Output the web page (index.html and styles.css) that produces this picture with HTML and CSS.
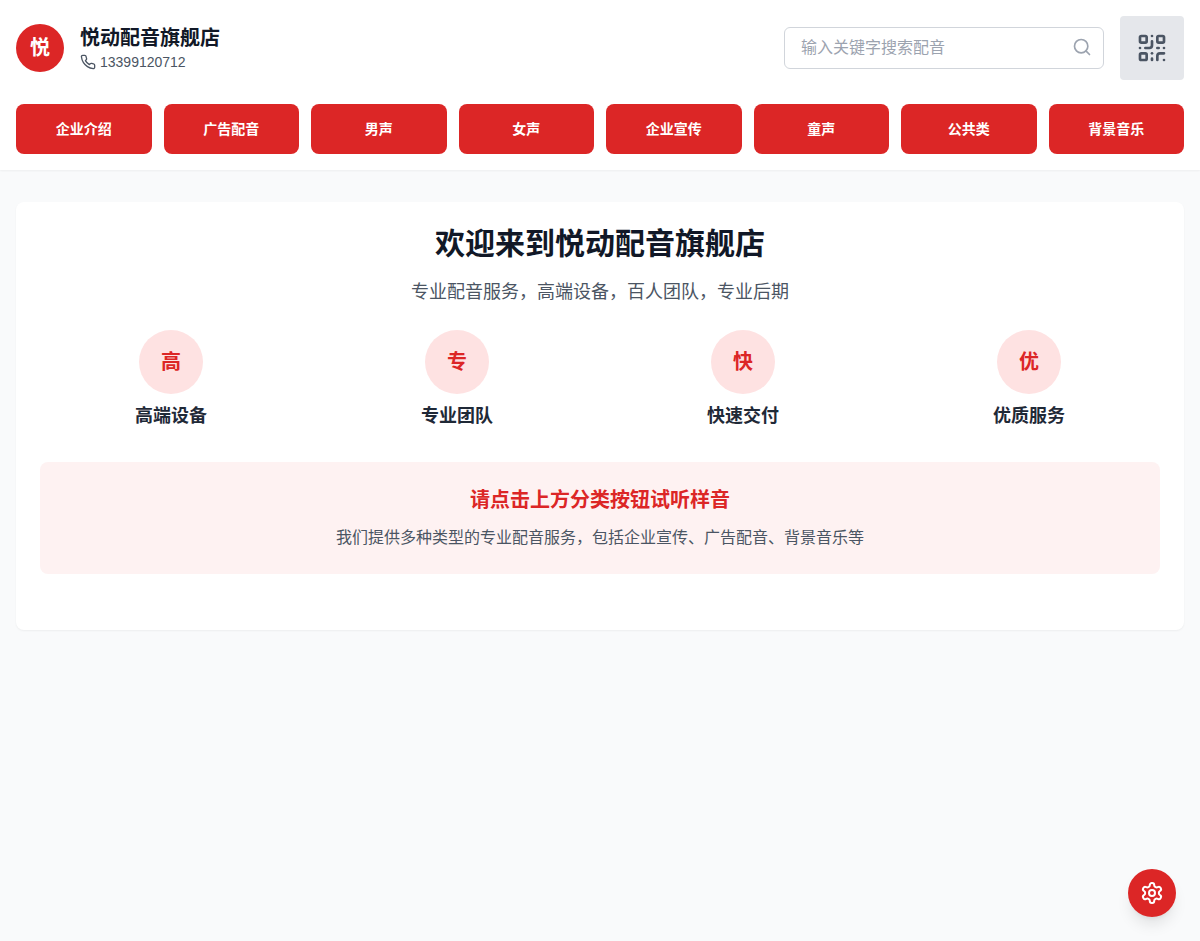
FILE: index.html
```html
<!DOCTYPE html>
<html lang="zh-CN">
<head>
    <meta charset="UTF-8">
    <meta name="viewport" content="width=device-width, initial-scale=1.0">
    <title>悦动配音旗舰店</title>
    <link rel="stylesheet" href="styles.css">
</head>
<body>
    <header class="header">
        <div class="top-bar">
            <div class="brand">
                <div class="logo">悦</div>
                <div>
                    <h1>悦动配音旗舰店</h1>
                    <a class="phone" href="tel:13399120712">
                        <svg class="icon" width="16" height="16" viewBox="0 0 24 24" aria-hidden="true">
                            <path d="M22 16.92v3a2 2 0 0 1-2.18 2 19.79 19.79 0 0 1-8.63-3.07 19.5 19.5 0 0 1-6-6 19.79 19.79 0 0 1-3.07-8.67A2 2 0 0 1 4.11 2h3a2 2 0 0 1 2 1.72 12.84 12.84 0 0 0 .7 2.81 2 2 0 0 1-.45 2.11L8.09 9.91a16 16 0 0 0 6 6l1.27-1.27a2 2 0 0 1 2.11-.45 12.84 12.84 0 0 0 2.81.7A2 2 0 0 1 22 16.92z"/>
                        </svg>
                        <span>13399120712</span>
                    </a>
                </div>
            </div>

            <div class="tools">
                <form class="search" role="search">
                    <input type="text" placeholder="输入关键字搜索配音" aria-label="输入关键字搜索配音">
                    <button type="submit" class="search-btn" aria-label="搜索">
                        <svg class="icon" width="20" height="20" viewBox="0 0 24 24" aria-hidden="true">
                            <circle cx="11" cy="11" r="8"/>
                            <path d="m21 21-4.3-4.3"/>
                        </svg>
                    </button>
                </form>
                <button type="button" class="qr-btn" aria-label="二维码">
                    <svg class="icon" width="32" height="32" viewBox="0 0 24 24" aria-hidden="true">
                        <rect width="5" height="5" x="3" y="3" rx="1"/>
                        <rect width="5" height="5" x="16" y="3" rx="1"/>
                        <rect width="5" height="5" x="3" y="16" rx="1"/>
                        <path d="M21 16h-3a2 2 0 0 0-2 2v3"/>
                        <path d="M21 21v.01"/>
                        <path d="M12 7v3a2 2 0 0 1-2 2H7"/>
                        <path d="M3 12h.01"/>
                        <path d="M12 3h.01"/>
                        <path d="M12 16v.01"/>
                        <path d="M16 12h1"/>
                        <path d="M21 12v.01"/>
                        <path d="M12 21v-1"/>
                    </svg>
                </button>
            </div>
        </div>

        <nav class="categories">
            <button type="button">企业介绍</button>
            <button type="button">广告配音</button>
            <button type="button">男声</button>
            <button type="button">女声</button>
            <button type="button">企业宣传</button>
            <button type="button">童声</button>
            <button type="button">公共类</button>
            <button type="button">背景音乐</button>
        </nav>
    </header>

    <main class="main">
        <section class="welcome">
            <h2>欢迎来到悦动配音旗舰店</h2>
            <p class="intro">专业配音服务，高端设备，百人团队，专业后期</p>

            <div class="features">
                <div class="feature">
                    <div class="feature-icon">高</div>
                    <h3>高端设备</h3>
                </div>
                <div class="feature">
                    <div class="feature-icon">专</div>
                    <h3>专业团队</h3>
                </div>
                <div class="feature">
                    <div class="feature-icon">快</div>
                    <h3>快速交付</h3>
                </div>
                <div class="feature">
                    <div class="feature-icon">优</div>
                    <h3>优质服务</h3>
                </div>
            </div>

            <div class="notice">
                <h3>请点击上方分类按钮试听样音</h3>
                <p>我们提供多种类型的专业配音服务，包括企业宣传、广告配音、背景音乐等</p>
            </div>
        </section>
    </main>

    <button type="button" class="settings-btn" aria-label="设置">
        <svg class="icon" width="24" height="24" viewBox="0 0 24 24" aria-hidden="true">
            <path d="M12.22 2h-.44a2 2 0 0 0-2 2v.18a2 2 0 0 1-1 1.73l-.43.25a2 2 0 0 1-2 0l-.15-.08a2 2 0 0 0-2.73.73l-.22.38a2 2 0 0 0 .73 2.73l.15.1a2 2 0 0 1 1 1.72v.51a2 2 0 0 1-1 1.74l-.15.09a2 2 0 0 0-.73 2.73l.22.38a2 2 0 0 0 2.73.73l.15-.08a2 2 0 0 1 2 0l.43.25a2 2 0 0 1 1 1.73V20a2 2 0 0 0 2 2h.44a2 2 0 0 0 2-2v-.18a2 2 0 0 1 1-1.73l.43-.25a2 2 0 0 1 2 0l.15.08a2 2 0 0 0 2.73-.73l.22-.39a2 2 0 0 0-.73-2.73l-.15-.08a2 2 0 0 1-1-1.74v-.5a2 2 0 0 1 1-1.74l.15-.09a2 2 0 0 0 .73-2.73l-.22-.38a2 2 0 0 0-2.73-.73l-.15.08a2 2 0 0 1-2 0l-.43-.25a2 2 0 0 1-1-1.73V4a2 2 0 0 0-2-2z"/>
            <circle cx="12" cy="12" r="3"/>
        </svg>
    </button>
</body>
</html>
```
FILE: styles.css
```css
* {
    margin: 0;
    padding: 0;
    box-sizing: border-box;
}

body {
    font-family: "Liberation Sans", "Noto Sans CJK SC", sans-serif;
    font-size: 16px;
    line-height: 24px;
    color: #111827;
    background: #f9fafb;
    min-height: 100vh;
}

button,
input {
    font: inherit;
}

button {
    border: none;
    cursor: pointer;
}

.icon {
    display: block;
    flex-shrink: 0;
    fill: none;
    stroke: currentColor;
    stroke-width: 2;
    stroke-linecap: round;
    stroke-linejoin: round;
}

/* Header */
.header {
    background: white;
    padding: 16px;
    box-shadow: 0 1px 2px rgba(0, 0, 0, 0.05);
}

.top-bar {
    display: flex;
    align-items: center;
    justify-content: space-between;
    margin-bottom: 24px;
}

.brand {
    display: flex;
    align-items: center;
    gap: 16px;
}

.logo {
    display: flex;
    align-items: center;
    justify-content: center;
    width: 48px;
    height: 48px;
    border-radius: 50%;
    background: #dc2626;
    color: white;
    font-size: 20px;
    font-weight: bold;
}

.brand h1 {
    font-size: 20px;
    line-height: 28px;
}

.phone {
    display: flex;
    align-items: center;
    gap: 4px;
    color: #4b5563;
    font-size: 14px;
    line-height: 20px;
    text-decoration: none;
}

.tools {
    display: flex;
    align-items: center;
    gap: 16px;
}

.search {
    position: relative;
    width: 320px;
}

.search input {
    display: block;
    width: 100%;
    height: 42px;
    padding: 8px 48px 8px 16px;
    border: 1px solid #d1d5db;
    border-radius: 6px;
    background: white;
    color: #111827;
}

.search input::placeholder {
    color: #9ca3af;
}

.search input:focus {
    outline: none;
    border-color: #dc2626;
}

.search-btn {
    position: absolute;
    top: 10px;
    right: 12px;
    background: none;
    color: #9ca3af;
}

.qr-btn {
    display: flex;
    align-items: center;
    justify-content: center;
    width: 64px;
    height: 64px;
    border-radius: 4px;
    background: #e5e7eb;
    color: #4b5563;
}

.categories {
    display: grid;
    grid-template-columns: repeat(8, 1fr);
    gap: 12px;
}

.categories button {
    height: 50px;
    border-radius: 8px;
    background: #dc2626;
    color: white;
    font-size: 14px;
    font-weight: bold;
    line-height: 20px;
}

.categories button:hover {
    background: #b91c1c;
}

/* Main content */
.main {
    padding: 32px 16px;
}

.welcome {
    padding: 24px 24px 56px;
    border-radius: 8px;
    background: white;
    box-shadow: 0 1px 2px rgba(0, 0, 0, 0.05);
    text-align: center;
}

.welcome h2 {
    margin-bottom: 16px;
    font-size: 30px;
    line-height: 36px;
}

.intro {
    margin-bottom: 24px;
    color: #4b5563;
    font-size: 18px;
    line-height: 28px;
}

.features {
    display: grid;
    grid-template-columns: repeat(4, 1fr);
    gap: 24px;
    margin-bottom: 32px;
}

.feature-icon {
    display: flex;
    align-items: center;
    justify-content: center;
    width: 64px;
    height: 64px;
    margin: 0 auto 8px;
    border-radius: 50%;
    background: #fee2e2;
    color: #dc2626;
    font-size: 20px;
    font-weight: bold;
}

.feature h3 {
    color: #1f2937;
    font-size: 18px;
    line-height: 28px;
}

.notice {
    padding: 24px;
    border-radius: 8px;
    background: #fef2f2;
}

.notice h3 {
    margin-bottom: 12px;
    color: #dc2626;
    font-size: 20px;
    line-height: 28px;
}

.notice p {
    color: #4b5563;
}

/* Floating settings button */
.settings-btn {
    position: fixed;
    right: 24px;
    bottom: 24px;
    display: flex;
    align-items: center;
    justify-content: center;
    width: 48px;
    height: 48px;
    border-radius: 50%;
    background: #dc2626;
    color: white;
    box-shadow: 0 10px 15px -3px rgba(0, 0, 0, 0.1), 0 4px 6px -4px rgba(0, 0, 0, 0.1);
}
```
